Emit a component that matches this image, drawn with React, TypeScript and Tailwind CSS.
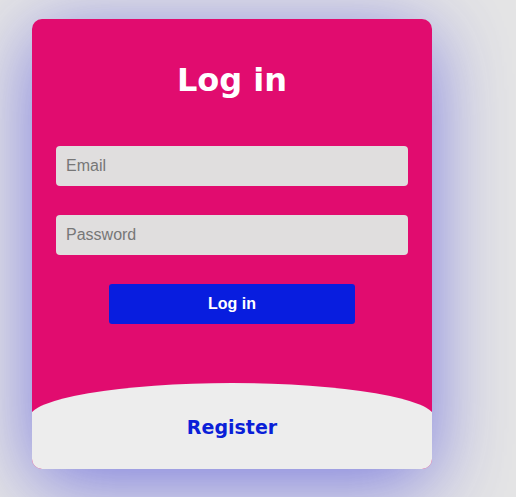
import { useState } from "react";

export default function App() {
  const [email, setEmail] = useState("");
  const [password, setPassword] = useState("");

  const handleSubmit = (e: React.FormEvent) => {
    e.preventDefault();
  };

  return (
    // Page background
    <div className="min-h-[497px] w-full bg-[#e5e5e5] pt-[19px] pl-[32px]">
      {/* Card */}
      <div className="w-[400px] h-[450px] flex flex-col bg-[#e10c6f] rounded-[10px] overflow-hidden shadow-[0_15px_80px_rgba(50,50,220,0.6)]">
        <h1 className="mt-[42px] text-center text-white font-bold text-[32px] leading-[38px] font-['DejaVu_Sans',Verdana,sans-serif]">
          Log in
        </h1>

        <form onSubmit={handleSubmit} className="mt-[47px] px-[24px] flex flex-col gap-[29px]">
          <input
            type="email"
            placeholder="Email"
            value={email}
            onChange={(e) => setEmail(e.target.value)}
            className="w-full h-[40px] px-[10px] bg-[#e0dede] rounded-[4px] text-[16px] text-[#333] font-['Liberation_Sans',Arial,sans-serif] placeholder:text-[#777] outline-none"
          />
          <input
            type="password"
            placeholder="Password"
            value={password}
            onChange={(e) => setPassword(e.target.value)}
            className="w-full h-[40px] px-[10px] bg-[#e0dede] rounded-[4px] text-[16px] text-[#333] font-['Liberation_Sans',Arial,sans-serif] placeholder:text-[#777] outline-none"
          />
          <button
            type="submit"
            className="self-center w-[246px] h-[40px] bg-[#081ddf] rounded-[3px] text-white font-bold text-[16px] font-['Liberation_Sans',Arial,sans-serif]"
          >
            Log in
          </button>
        </form>

        {/* Footer with curved top, a bit wider than the card */}
        <div className="mt-auto self-center shrink-0 w-[406px] h-[86px] flex justify-center bg-[#ededed] rounded-t-[50%_35px]">
          <button className="mt-[32px] h-[24px] text-[19px] leading-[24px] font-bold text-[#0a1fd8] font-['DejaVu_Sans',Verdana,sans-serif]">
            Register
          </button>
        </div>
      </div>
    </div>
  );
}
